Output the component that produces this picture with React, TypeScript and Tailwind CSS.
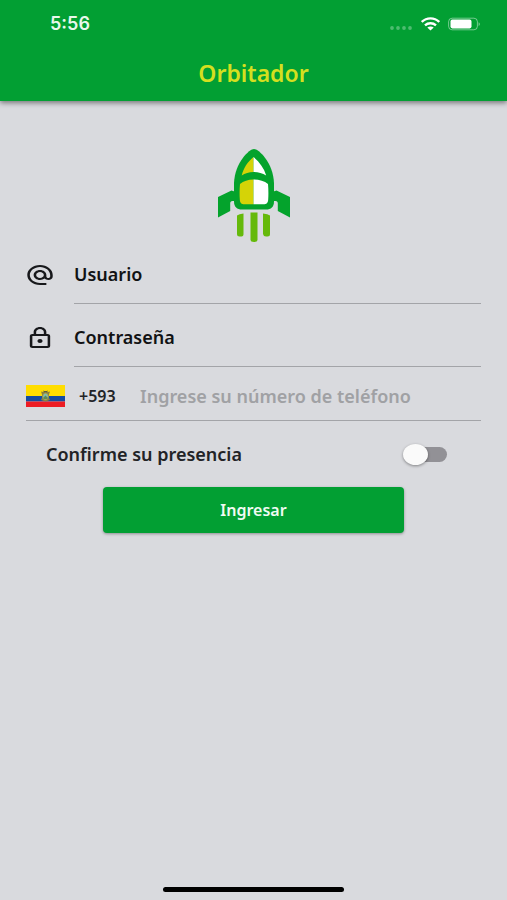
import React, { useState } from 'react';

const StatusIcons: React.FC = () => (
  <div className="flex items-center gap-2">
    <svg width="24" height="14" viewBox="0 0 24 14" fill="#ffffff" fillOpacity="0.3" aria-hidden="true">
      <circle cx="3" cy="11" r="1.9" />
      <circle cx="9" cy="11" r="1.9" />
      <circle cx="15" cy="11" r="1.9" />
      <circle cx="21" cy="11" r="1.9" />
    </svg>
    <svg width="19" height="14" viewBox="0 0 19 14" fill="none" stroke="#ffffff" strokeWidth="2.4" aria-hidden="true">
      <path d="M.8 5C5.700 .2 13.300 .2 18.200 5" />
      <path d="M4 8.300c3.100-2.800 7.900-2.800 11 0" />
      <path d="M6.300 10.600c1.800-1.500 4.600-1.500 6.400 0L9.500 13.400z" fill="#ffffff" stroke="none" />
    </svg>
    <svg width="33" height="14" viewBox="0 0 33 14" aria-hidden="true">
      <rect x=".6" y="1.200" width="28.800" height="11.600" rx="3.500" fill="none" stroke="#ffffff" strokeOpacity="0.45" />
      <rect x="2.500" y="2.600" width="21" height="8.800" rx="1.800" fill="#ffffff" />
      <path d="M30.600 5.300c1.600.6 1.600 3.200 0 3.800z" fill="#ffffff" fillOpacity="0.5" />
    </svg>
  </div>
);

const RocketLogo: React.FC = () => (
  <svg width="74" height="98" viewBox="0 0 74 98" aria-label="Orbitador" role="img">
    {/* wings */}
    <path d="M1 52 14.500 45.500 19 47V56H15.500C13.800 56 13.200 57 13.200 58.500V66L1 72.500z" fill="#04a32c" />
    <path d="M73 52 59.500 45.500 55 47V56H58.500C60.200 56 60.800 57 60.800 58.500V66L73 72.500z" fill="#04a32c" />
    {/* body */}
    <path d="M37 4C41.500 4 56 17 57 38V56.500C57 62 54 64.500 49 64.500H25C20 64.500 17 62 17 56.500V38C18 17 32.500 4 37 4z" fill="#04a32c" />
    {/* nose window */}
    <path d="M36.500 12C30.500 17 26.500 23 24.700 30.500 28 28.300 32 27.200 36.500 27z" fill="#d5d307" />
    <path d="M36.500 12C42.500 17 47 23 49.200 30.500 45.500 28.300 41 27.200 36.500 27z" fill="#fff" />
    {/* cabin window */}
    <path d="M36.500 34.500C31 34.500 26.500 36 23 39 22.500 44 22.500 50 22.800 54.500 23 58 24.500 59.300 27.500 59.300H36.500z" fill="#d5d307" />
    <path d="M36.500 34.500C42 34.500 47.500 36 51 39 51.500 44 51.500 50 51.200 54.500 51 58 49.500 59.300 46.500 59.300H36.500z" fill="#fff" />
    {/* exhaust */}
    <g fill="#65b90b">
      <path d="M20 70.500Q22 69 26.500 68.500V89.500Q26.500 91.500 24.500 91.500H22.500Q20 91.500 20 89z" />
      <path d="M33.500 67.500H40.500V94.500Q40.500 97 37 97T33.500 94.500z" />
      <path d="M46 68.500Q51 69 53 70.500V89Q53 91.500 50.500 91.500H49Q46.500 91.500 46 89z" />
    </g>
  </svg>
);

const AtIcon: React.FC = () => (
  <svg width="28" height="22" viewBox="1 1 22 22" preserveAspectRatio="none" fill="#17181b" aria-hidden="true">
    <path d="M12 2C6.480 2 2 6.480 2 12s4.480 10 10 10h5v-2h-5c-4.340 0-8-3.660-8-8s3.660-8 8-8 8 3.660 8 8v1.430c0 .79-.71 1.570-1.500 1.570s-1.500-.78-1.500-1.570V12c0-2.760-2.240-5-5-5s-5 2.240-5 5 2.240 5 5 5c1.380 0 2.640-.56 3.540-1.470.65.89 1.770 1.470 2.960 1.470 1.970 0 3.500-1.600 3.500-3.570V12c0-5.520-4.480-10-10-10zm0 13c-1.660 0-3-1.340-3-3s1.340-3 3-3 3 1.340 3 3-1.340 3-3 3z" />
  </svg>
);

const LockIcon: React.FC = () => (
  <svg width="28" height="22" viewBox="1 1 22 22" preserveAspectRatio="none" fill="#17181b" aria-hidden="true">
    <path d="M18 8h-1V6c0-2.760-2.240-5-5-5S7 3.240 7 6v2H6c-1.100 0-2 .9-2 2v10c0 1.100.9 2 2 2h12c1.100 0 2-.9 2-2V10c0-1.100-.9-2-2-2zM9 6c0-1.660 1.340-3 3-3s3 1.340 3 3v2H9V6zm9 14H6V10h12v10zm-6-3c1.100 0 2-.9 2-2s-.9-2-2-2-2 .9-2 2 .9 2 2 2z" />
  </svg>
);

const EcuadorFlag: React.FC = () => (
  <svg width="39" height="22" viewBox="0 0 39 22" aria-hidden="true">
    <rect width="39" height="11" fill="#ffdd00" />
    <rect y="11" width="39" height="5.500" fill="#144ba0" />
    <rect y="16.500" width="39" height="5.500" fill="#ed1c24" />
    <path d="M15 6.500 19.500 7.500l4.500-1L23 9.500V13l1 2-4.500 1.500L15 15l1-2V9.500z" fill="#8a8040" />
    <path d="M17 5.500q2.500 1 5 0l-1 2h-3z" fill="#5b5c47" />
    <ellipse cx="19.500" cy="11.500" rx="2.700" ry="3.300" fill="#7fbfae" stroke="#b89a3c" strokeWidth=".7" />
    <path d="M17.500 12.500l2-2 2 2v1.500h-4z" fill="#5b8a58" />
  </svg>
);

interface FieldProps {
  id: string;
  label: string;
  type: string;
  icon: React.ReactNode;
}

const Field: React.FC<FieldProps> = ({ id, label, type, icon }) => (
  <div className="flex h-[59px] items-stretch">
    <label htmlFor={id} aria-label={label} className="flex w-12 shrink-0 items-center">
      {icon}
    </label>
    <input
      id={id}
      type={type}
      placeholder={label}
      className="min-w-0 flex-1 border-b border-[#a3a4a8] bg-transparent text-lg font-semibold text-[#111214] outline-none placeholder:text-[#111214]"
    />
  </div>
);

export default function App() {
  const [present, setPresent] = useState(false);

  return (
    <div className="flex min-h-screen flex-col bg-[#d9dade] font-['Noto_Sans','Open_Sans',sans-serif]">
      <header className="relative bg-[#029f33] shadow-[0_2px_5px_rgba(0,0,0,0.45)]">
        <div className="flex h-[47px] items-center justify-between pr-[26px] pl-[50px]">
          <span className="font-[Inter,sans-serif] text-lg font-semibold text-[#e9f8ec]">5:56</span>
          <StatusIcons />
        </div>
        <h1 className="h-[54px] text-center text-[23px] leading-[52px] font-semibold text-[#d5df1f]">Orbitador</h1>
      </header>

      <main className="flex-1 px-[26px] pt-11">
        <div className="mb-0.5 flex justify-center">
          <RocketLogo />
        </div>

        <form onSubmit={(e) => e.preventDefault()}>
          <div className="flex flex-col gap-1">
            <Field id="user" label="Usuario" type="text" icon={<AtIcon />} />
            <Field id="password" label="Contraseña" type="password" icon={<LockIcon />} />

            {/* Phone */}
            <div className="flex h-[50px] items-center border-b border-[#a3a4a8]">
              <EcuadorFlag />
              <label htmlFor="phone" className="ml-3.5 w-[61px] text-base font-semibold text-[#222326]">
                +593
              </label>
              <input
                id="phone"
                type="tel"
                placeholder="Ingrese su número de teléfono"
                className="min-w-0 flex-1 bg-transparent text-lg font-semibold text-[#222326] outline-none placeholder:text-[#a0a1a4]"
              />
            </div>
          </div>

          {/* Presence switch */}
          <div className="flex h-[66px] items-center justify-between pr-[34px] pl-5">
            <label htmlFor="presence" className="text-lg font-semibold text-[#222326]">
              Confirme su presencia
            </label>
            <input
              id="presence"
              type="checkbox"
              role="switch"
              checked={present}
              onChange={(e) => setPresent(e.target.checked)}
              className="relative h-[15px] w-[43px] appearance-none rounded-full bg-[#929196] before:absolute before:-top-[3px] before:-left-px before:h-[21px] before:w-[25px] before:rounded-[50%] before:bg-[#fafafa] before:shadow-[0_1px_3px_rgba(0,0,0,0.4)] checked:bg-[#029f33] checked:before:left-[19px]"
            />
          </div>

          <button
            type="submit"
            className="mx-auto block h-[46px] w-[66%] rounded bg-[#029f33] text-base font-semibold text-[#f1fbf3] shadow-[0_1px_3px_rgba(0,0,0,0.35)]"
          >
            Ingresar
          </button>
        </form>
      </main>

      <footer className="flex justify-center pb-2">
        <div className="h-[5px] w-[181px] rounded-full bg-black" />
      </footer>
    </div>
  );
}
